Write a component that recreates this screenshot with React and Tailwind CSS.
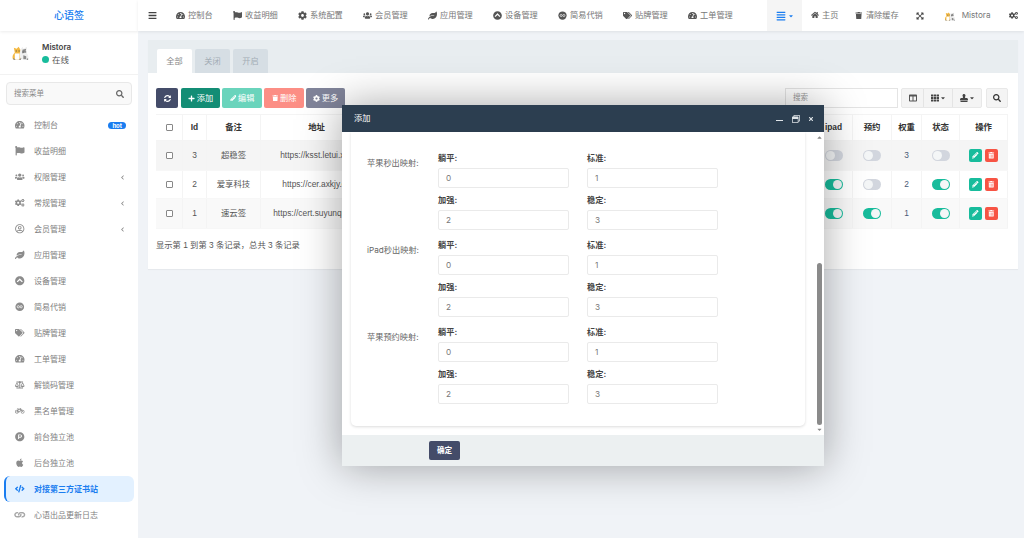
import React from "react";
import {
  FaTachometerAlt, FaFlag, FaCog, FaUsers, FaLeaf, FaTags, FaBars, FaHome, FaTrash, FaTrashAlt,
  FaExpandArrowsAlt, FaCogs, FaSyncAlt, FaPlus, FaPencilAlt, FaAlignJustify, FaTh, FaSearch, FaRegUserCircle,
  FaChevronCircleUp, FaBalanceScale, FaBicycle, FaProductHunt, FaApple, FaCode, FaChevronLeft,
  FaCaretDown, FaStamp, FaColumns, FaRegWindowRestore, FaTimes, FaCaretUp, FaLink,
} from "react-icons/fa";

const font = "font-['Inter','Noto_Sans_CJK_SC',sans-serif]";
const tableFont = "font-['Liberation_Sans','Noto_Sans_CJK_SC',sans-serif]";

function Avatar({ size = 20 }) {
  return (
    <svg width={size} height={size} viewBox="0 0 20 20">
      <path d="M2 17c-1-3 0-5 2-7L3 5l3 1 2-2 2 3c1 3 1 7 0 10z" fill="#f4b942" />
      <path d="M4 11h5v6H4z" fill="#fff" />
      <path d="M10 17c-1-4-1-7 0-10l2-3 1 2 4-2-1 6c2 2 3 4 2 7z" fill="#efefef" />
      <path d="M12 7l4-1-1 4-3 1zM13 13l3 1 0 3-3 0z" fill="#8a8a8a" />
      <path d="M5 8h1v1H5zM8 8h1v1H8zM12 9h1v1h-1zM15 9h1v1h-1z" fill="#444" />
      <path d="M2 16l1 2 2-1zM8 17l2 1 1-2zM16 17l2 1 0-2z" fill="#777" />
    </svg>
  );
}

function ResellIcon() {
  return (
    <svg viewBox="0 0 12 12" className="w-[1em] h-[1em]">
      <circle cx="6" cy="6" r="5.500" fill="currentColor" />
      <circle cx="4.200" cy="6" r="1.400" fill="none" stroke="#fff" strokeWidth="0.900" />
      <circle cx="7.800" cy="6" r="1.400" fill="none" stroke="#fff" strokeWidth="0.900" />
    </svg>
  );
}

function ChainIcon() {
  return <FaLink className="rotate-45 text-[#a8a8a8]" />;
}

const menu = [
  [FaTachometerAlt, "控制台", "hot"],
  [FaFlag, "收益明细"],
  [FaUsers, "权限管理", "arrow"],
  [FaCogs, "常规管理", "arrow"],
  [FaRegUserCircle, "会员管理", "arrow"],
  [FaLeaf, "应用管理"],
  [FaChevronCircleUp, "设备管理"],
  [ResellIcon, "简易代销"],
  [FaTags, "贴牌管理"],
  [FaTachometerAlt, "工单管理"],
  [FaBalanceScale, "解锁码管理"],
  [FaBicycle, "黑名单管理"],
  [FaProductHunt, "前台独立池"],
  [FaApple, "后台独立池"],
  [FaCode, "对接第三方证书站", "active"],
  [ChainIcon, "心语出品更新日志"],
];

function Sidebar() {
  return (
    <aside className="w-[138px] shrink-0 bg-white flex flex-col h-[538px] overflow-hidden">
      <div className="h-[31px] flex items-center justify-center text-[#1a7df0] text-[10px] font-medium shadow-[0_1px_3px_rgba(0,0,0,0.08)]">心语签</div>
      <div className="h-[44px] border-b border-[#f2f2f2] flex items-center pl-[11px] gap-[12px]">
        <Avatar size={19} />
        <div className="flex flex-col gap-[3px] pt-[1px]">
          <div className="text-[8px] leading-[10px] font-semibold text-[#444]">Mistora</div>
          <div className="flex items-center gap-[3px] text-[8.5px] leading-[10px] text-[#555]">
            <span className="w-[7px] h-[7px] rounded-full bg-[#18bc9c]" />在线
          </div>
        </div>
      </div>
      <div className="mx-[6px] mt-[7px] h-[23px] rounded-[4px] border border-[#e8e8e8] bg-[#f9f9f9] flex items-center justify-between pl-[7px] pr-[7px] text-[7.5px] text-[#888]">
        搜索菜单<FaSearch className="text-[8px] text-[#666]" />
      </div>
      <nav className="mt-[7px] flex flex-col">
        {menu.map(([Icon, label, extra]) => (
          <div
            key={label}
            className={`h-[26px] flex items-center text-[8px] ${
              extra === "active"
                ? "mx-[4px] pl-[9px] rounded-[6px] border-l-2 border-[#1a7df0] bg-[#e3f1ff] text-[#1a7df0] font-semibold"
                : "pl-[15px] pr-[12px] text-[#808080]"
            }`}
          >
            <span className={`w-[10px] flex justify-center text-[9.500px] ${extra === "active" ? "text-[#1a7df0]" : "text-[#8c8c8c]"}`}>
              <Icon />
            </span>
            <span className="ml-[9px] flex-1">{label}</span>
            {extra === "hot" && <span className="h-[7px] px-[4px] rounded-full bg-[#1a7df0] text-white text-[6px] leading-[7px] font-bold">hot</span>}
            {extra === "arrow" && <FaChevronLeft className="text-[5px] text-[#888] mr-[1px]" />}
          </div>
        ))}
      </nav>
    </aside>
  );
}

const topItems = [
  [FaTachometerAlt, "控制台", "w-[57px]"],
  [FaFlag, "收益明细", "w-[65px]"],
  [FaCog, "系统配置", "w-[65px]"],
  [FaUsers, "会员管理", "w-[65px]"],
  [FaLeaf, "应用管理", "w-[65px]"],
  [FaChevronCircleUp, "设备管理", "w-[65px]"],
  [ResellIcon, "简易代销", "w-[65px]"],
  [FaTags, "贴牌管理", "w-[65px]"],
  [FaTachometerAlt, "工单管理", "w-[65px]"],
];

function Topbar() {
  return (
    <header className="h-[31px] bg-white flex items-center text-[8.2px] text-[#777] shadow-[0_1px_3px_rgba(0,0,0,0.08)] relative">
      <FaBars className="ml-[10px] text-[9px] text-[#444]" />
      <div className="flex ml-[18px] w-[592px]">
        {topItems.map(([Icon, label, w]) => (
          <span key={label} className={`${w} shrink-0 flex items-center gap-[3px] whitespace-nowrap`}>
            <span className="w-[10px] flex justify-center text-[9px] text-[#555]"><Icon /></span>{label}
          </span>
        ))}
      </div>
      <div className="h-[31px] w-[35px] bg-[#f5f5f5] flex items-center justify-center gap-[2px] text-[#1a7df0]">
        <FaAlignJustify className="text-[10px]" /><FaCaretDown className="text-[6px]" />
      </div>
      <span className="flex items-center gap-[3px] ml-[9px]"><FaHome className="text-[8px] text-[#555]" />主页</span>
      <span className="flex items-center gap-[3px] ml-[17px]"><FaTrash className="text-[7.5px] text-[#555]" />清除缓存</span>
      <FaExpandArrowsAlt className="ml-[17px] text-[8px] text-[#444]" />
      <span className="ml-[20px]"><Avatar size={12} /></span>
      <span className="ml-[6px]">Mistora</span>
      <FaCogs className="ml-[18px] text-[9px] text-[#444]" />
    </header>
  );
}

function Toggle({ on }) {
  return (
    <span className={`inline-flex w-[18px] h-[11px] rounded-full items-center px-[1px] ${on ? "bg-[#18bc9c] justify-end" : "bg-[#d2d6de] justify-start"}`}>
      <span className="w-[9px] h-[9px] rounded-full bg-[#f4f6f7]" />
    </span>
  );
}

const rows = [
  { id: 3, note: "超稳签", url: "https://ksst.letui.xyz", t: [0, 0, 0], w: 3, h: "h-[30px]", bg: "bg-[#f5f5f5]" },
  { id: 2, note: "爱享科技", url: "https://cer.axkjy.cn", t: [1, 0, 1], w: 2, h: "h-[28px]", bg: "bg-white" },
  { id: 1, note: "速云签", url: "https://cert.suyunqm.cn", t: [1, 1, 1], w: 1, h: "h-[30px]", bg: "bg-[#f9f9f9]" },
];

const cols = "grid grid-cols-[27px_24px_54px_112px_442px_38px_39px_30px_38px_48px]";
const cell = "border-r border-[#f4f4f4] flex items-center justify-center";

function Check() {
  return <span className="w-[7px] h-[7px] rounded-[1px] border border-[#888] bg-white" />;
}

function Table() {
  return (
    <div className={`mt-[6px] text-[8.4px] text-[#555] ${tableFont}`}>
      <div className={`${cols} h-[27px] border-y border-[#f4f4f4] font-bold text-[#333]`}>
        <div className={cell}><Check /></div>
        <div className={cell}>Id</div>
        <div className={cell}>备注</div>
        <div className={cell}>地址</div>
        <div className={cell} />
        <div className={cell}>ipad</div>
        <div className={cell}>预约</div>
        <div className={cell}>权重</div>
        <div className={cell}>状态</div>
        <div className={cell}>操作</div>
      </div>
      {rows.map((r) => (
        <div key={r.id} className={`${cols} ${r.h} ${r.bg} border-b border-[#f7f7f7]`}>
          <div className={cell}><Check /></div>
          <div className={cell}>{r.id}</div>
          <div className={cell}>{r.note}</div>
          <div className={`${cell} whitespace-nowrap overflow-hidden`}>{r.url}</div>
          <div className={cell} />
          <div className={cell}><Toggle on={r.t[0]} /></div>
          <div className={cell}><Toggle on={r.t[1]} /></div>
          <div className={`${cell} text-[#4a5a75]`}>{r.w}</div>
          <div className={cell}><Toggle on={r.t[2]} /></div>
          <div className={`${cell} gap-[3px]`}>
            <span className="w-[13px] h-[13px] rounded-[2px] bg-[#18bc9c] text-white flex items-center justify-center text-[6.5px]"><FaPencilAlt /></span>
            <span className="w-[13px] h-[13px] rounded-[2px] bg-[#f75444] text-white flex items-center justify-center text-[6.5px]"><FaTrashAlt /></span>
          </div>
        </div>
      ))}
    </div>
  );
}

function Btn({ className, children }) {
  return (
    <span className={`h-[20px] rounded-[2px] flex items-center justify-center gap-[2px] text-white text-[8.2px] ${className}`}>{children}</span>
  );
}

function Panel() {
  return (
    <section className="ml-[10px] w-[870px] mt-[9px] bg-white h-[229px] shadow-[0_1px_1px_rgba(0,0,0,0.04)]">
      <div className="h-[33px] bg-[#e8edf0] flex items-end pl-[9px] gap-[3px] text-[8.2px]">
        <span className="w-[35px] h-[24px] bg-white flex items-center justify-center text-[#888] rounded-t-[2px]">全部</span>
        <span className="w-[35px] h-[24px] bg-[#d6dee4] flex items-center justify-center text-[#a3adb5] rounded-t-[2px]">关闭</span>
        <span className="w-[35px] h-[24px] bg-[#d6dee4] flex items-center justify-center text-[#a3adb5] rounded-t-[2px]">开启</span>
      </div>
      <div className="pl-[8px] pr-[10px] pt-[15px]">
        <div className="flex items-center h-[20px]">
          <div className="flex gap-[2px]">
            <Btn className="w-[22px] mr-[1px] bg-[#444c69]"><FaSyncAlt className="text-[7px]" /></Btn>
            <Btn className="w-[39px] bg-[#138d75]"><FaPlus className="text-[7px]" />添加</Btn>
            <Btn className="w-[40px] bg-[#6ad4bc]"><FaPencilAlt className="text-[6.5px]" />编辑</Btn>
            <Btn className="w-[40px] bg-[#fc8e85]"><FaTrash className="text-[6.5px]" />删除</Btn>
            <Btn className="w-[39px] bg-[#80849a]"><FaCog className="text-[7px]" />更多</Btn>
          </div>
          <div className="ml-auto flex items-center w-[223px]">
            <span className="w-[113px] h-[20px] border border-[#e4e4e4] bg-white text-[7.5px] text-[#999] flex items-center pl-[7px]">搜索</span>
            <span className="ml-[3px] h-[20px] w-[81px] flex rounded-[2px] border border-[#e8e8e8] bg-[#f4f4f4] text-[#444]">
              <span className="w-[22px] border-r border-[#e4e4e4] flex items-center justify-center"><FaColumns className="text-[8px] text-[#555]" /></span>
              <span className="w-[29px] border-r border-[#e4e4e4] flex items-center justify-center gap-[1px]"><FaTh className="text-[8px]" /><FaCaretDown className="text-[6px]" /></span>
              <span className="flex-1 flex items-center justify-center gap-[1px]"><FaStamp className="text-[8px]" /><FaCaretDown className="text-[6px]" /></span>
            </span>
            <span className="ml-[4px] h-[20px] w-[22px] rounded-[2px] border border-[#e8e8e8] bg-[#f4f4f4] flex items-center justify-center"><FaSearch className="text-[8px] text-[#333]" /></span>
          </div>
        </div>
        <Table />
        <div className={`mt-[10px] text-[8.3px] text-[#555] ${tableFont}`}>显示第 1 到第 3 条记录，总共 3 条记录</div>
      </div>
    </section>
  );
}

function Field({ label, value }) {
  return (
    <div>
      <div className="h-[10px] leading-[10px] text-[8.2px] font-bold text-[#444]">{label}</div>
      <div className="mt-[5px] h-[20px] w-[131px] rounded-[2px] border border-[#eaeaea] bg-white flex items-center pl-[7px] text-[8.2px] text-[#777]">{value}</div>
    </div>
  );
}

function Group({ title, className }) {
  return (
    <div className={`flex ${className}`}>
      <div className="w-[87px] pl-[16px] pt-[5px] text-[8.2px] leading-[10px] text-[#666] whitespace-nowrap">{title}</div>
      <div className="grid grid-cols-[131px_131px] gap-x-[18px] gap-y-[7px]">
        <Field label="躺平:" value="0" />
        <Field label="标准:" value="1" />
        <Field label="加强:" value="2" />
        <Field label="稳定:" value="3" />
      </div>
    </div>
  );
}

function Modal() {
  return (
    <div className={`absolute left-[342px] top-[105px] w-[482px] h-[361px] flex flex-col bg-white shadow-[0_0_40px_rgba(0,0,0,0.35)] ${font}`}>
      <div className="h-[27px] shrink-0 bg-[#2c3e50] flex items-center pl-[12px] pr-[10px] text-white text-[8.2px]">
        <span>添加</span>
        <span className="ml-auto flex items-center text-[#dfe4e8]">
          <span className="w-[7px] h-[1px] mt-[4px] mr-[9px] bg-[#dfe4e8]" />
          <FaRegWindowRestore className="text-[8px] mr-[8px]" />
          <FaTimes className="text-[6px]" />
        </span>
      </div>
      <div className="flex-1 flex min-h-0">
        <div className="flex-1 pl-[9px] pr-[10px] min-w-0">
          <div className="h-[294px] bg-white rounded-b-[5px] shadow-[0_1px_3px_rgba(0,0,0,0.14)] pt-[21px]">
            <Group title="苹果秒出映射:" className="" />
            <Group title="iPad秒出映射:" className="pt-[10px]" />
            <Group title="苹果预约映射:" className="pt-[10px]" />
          </div>
        </div>
        <div className="w-[8px] mr-[1px] shrink-0 flex flex-col items-center text-[#888]">
          <FaCaretUp className="text-[7px] mt-[2px]" />
          <div className="mt-[122px] w-[5px] h-[162px] rounded-full bg-[#8a8a8a]" />
          <FaCaretDown className="text-[7px] mt-[1px]" />
        </div>
      </div>
      <div className="h-[31px] shrink-0 bg-[#ecf0f1] flex items-center pl-[87px]">
        <span className="w-[31px] h-[19px] rounded-[2px] bg-[#444c69] text-white text-[7.6px] font-semibold flex items-center justify-center">确定</span>
      </div>
    </div>
  );
}

export default function App() {
  return (
    <div className={`relative flex w-[1024px] h-[538px] overflow-hidden bg-[#f0f3f7] ${font}`}>
      <Sidebar />
      <main className="flex-1 min-w-0">
        <Topbar />
        <Panel />
      </main>
      <Modal />
    </div>
  );
}
